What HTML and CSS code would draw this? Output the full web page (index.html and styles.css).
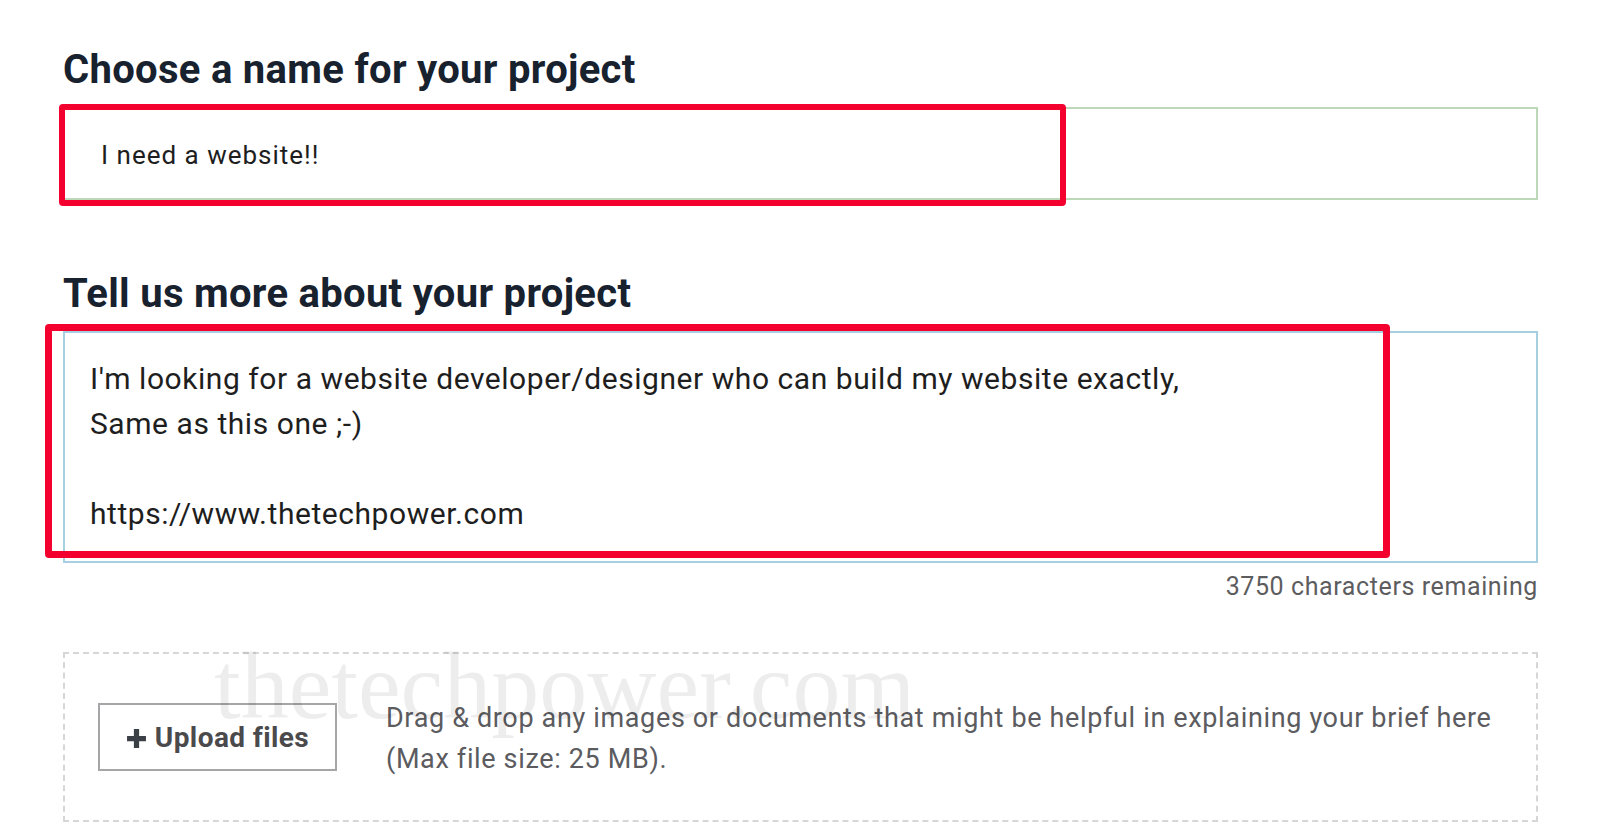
FILE: index.html
```html
<!DOCTYPE html>
<html lang="en">
<head>
<meta charset="utf-8">
<title>Post a project</title>
<link rel="stylesheet" href="styles.css">
</head>
<body>
<main class="form">
  <section class="field">
    <h2 class="label">Choose a name for your project</h2>
    <div class="input">I need a website!!</div>
  </section>
  <section class="field field-desc">
    <h2 class="label">Tell us more about your project</h2>
    <div class="textarea"><p>I'm looking for a website developer/designer who can build my website exactly,</p><p>Same as this one ;-)</p><p class="blank">&nbsp;</p><p>https://www.thetechpower.com</p></div>
    <div class="counter">3750 characters remaining</div>
  </section>
  <div class="dropzone">
    <button class="upload" type="button"><svg class="plus" viewBox="0 0 20 20" width="21" height="21" aria-hidden="true"><path d="M7.5 1h5v6.5H19v5h-6.5V19h-5v-6.5H1v-5h6.5z"/></svg>Upload files</button>
    <p class="hint">Drag &amp; drop any images or documents that might be helpful in explaining your brief here<br>(Max file size: 25 MB).</p>
  </div>
  <div class="watermark">thetechpower.com</div>
  <div class="annot annot-name"></div>
  <div class="annot annot-desc"></div>
</main>
</body>
</html>
```

FILE: styles.css
```css
* { box-sizing: border-box; }
html, body { margin: 0; padding: 0; background: #ffffff; }
body { font-family: Roboto, "Liberation Sans", Arial, sans-serif; color: #222; }

.form {
  position: relative;
  width: 1600px;
  height: 840px;
  padding: 47px 62px 0 63px;
  overflow: hidden;
}

.label {
  margin: 0 0 14px;
  font-size: 40px;
  line-height: 46px;
  font-weight: 700;
  color: #18212e;
  letter-spacing: 0.3px;
}

.input {
  height: 93px;
  border: 2px solid #bcd8b8;
  display: flex;
  align-items: center;
  padding: 3px 0 0 36px;
  font-size: 26px;
  letter-spacing: 1px;
  color: #1e1e1e;
}

.field-desc { margin-top: 71px; }

.textarea {
  height: 232px;
  border: 2px solid #a6cfe2;
  padding: 23px 25px 0;
  font-size: 30px;
  line-height: 45px;
  letter-spacing: 0.55px;
  color: #1e1e1e;
}
.textarea p { margin: 0; }

.counter {
  margin-top: 9px;
  text-align: right;
  font-size: 25px;
  line-height: 30px;
  letter-spacing: 0.6px;
  color: #5d5d5f;
}

.dropzone {
  margin-top: 50px;
  height: 170px;
  border: 2px dashed #d6d6d8;
  display: flex;
  align-items: center;
  padding-left: 33px;
  gap: 49px;
}

.upload {
  flex: none;
  width: 239px;
  height: 68px;
  border: 2px solid #a6a6a8;
  background: #fff;
  font-family: Roboto, "Liberation Sans", Arial, sans-serif;
  font-size: 28px;
  font-weight: 700;
  letter-spacing: 0.4px;
  color: #4a4a4d;
  display: flex;
  align-items: center;
  justify-content: center;
  gap: 8px;
  padding: 0;
}
.plus { fill: #3b3f46; flex: none; margin-top: 3px; }

.hint {
  margin: 4px 0 0;
  font-size: 27px;
  line-height: 41px;
  letter-spacing: 0.65px;
  color: #5b5b60;
}

.watermark {
  position: absolute;
  left: 214px;
  top: 636px;
  font-family: "Liberation Serif", "Times New Roman", serif;
  font-size: 96px;
  line-height: 100px;
  color: rgba(0, 0, 0, 0.07);
  pointer-events: none;
}

.annot {
  position: absolute;
  border: 6px solid #f4002f;
  border-radius: 4px;
  pointer-events: none;
}
.annot-name { left: 59px; top: 104px; width: 1007px; height: 102px; }
.annot-desc { left: 45px; top: 324px; width: 1345px; height: 234px; border-width: 7px; }
```
